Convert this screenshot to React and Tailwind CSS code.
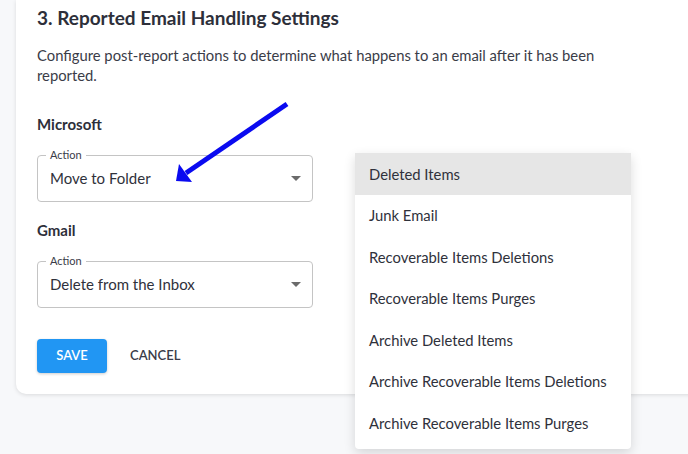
import React from "react";

const font = { fontFamily: "Lato, 'Noto Sans', sans-serif" };

function Caret() {
  return (
    <svg width="10" height="5" viewBox="0 0 10 5" className="shrink-0">
      <path d="M0 0 L10 0 L5 5 Z" fill="#6b6b6b" />
    </svg>
  );
}

function SelectBox({ value }) {
  return (
    <div className="relative w-[276px] h-[47px] border border-[#c4c4c4] rounded-[4px] flex items-center pl-[12px] pr-[11px]">
      <span className="absolute -top-[8px] left-[8px] bg-white px-[4px] text-[11px] leading-[14px] text-[#3a3c48]">
        Action
      </span>
      <span className="flex-1 text-[15px] text-[#2f313b]">{value}</span>
      <Caret />
    </div>
  );
}

const items = [
  "Deleted Items",
  "Junk Email",
  "Recoverable Items Deletions",
  "Recoverable Items Purges",
  "Archive Deleted Items",
  "Archive Recoverable Items Deletions",
  "Archive Recoverable Items Purges",
];

export default function App() {
  return (
    <div className="relative w-[688px] h-[454px] overflow-hidden bg-[#f7f8fa]" style={font}>
      <div className="ml-[16px] w-[700px] bg-white rounded-bl-[10px] shadow-[0_1px_4px_rgba(0,0,0,0.12)] pt-[6px] pl-[21px] pb-[21px]">
        <h2 className="text-[19px] leading-[24px] font-bold text-[#2d2f3a]">
          3. Reported Email Handling Settings
        </h2>
        <p className="mt-[15px] w-[580px] text-[14.8px] leading-[20px] text-[#3a3c48]">
          Configure post-report actions to determine what happens to an email after it has been reported.
        </p>
        <h3 className="mt-[29px] text-[15px] leading-[20px] font-bold text-[#2d2f3a]">Microsoft</h3>
        <div className="mt-[21px]">
          <SelectBox value="Move to Folder" />
        </div>
        <h3 className="mt-[18px] text-[15px] leading-[20px] font-bold text-[#2d2f3a]">Gmail</h3>
        <div className="mt-[21px]">
          <SelectBox value="Delete from the Inbox" />
        </div>
        <div className="mt-[31px] flex items-center">
          <button className="w-[70px] h-[34px] rounded-[4px] bg-[#2196f3] text-white text-[13px] font-semibold shadow-[0_1px_3px_rgba(0,0,0,0.2)]">
            SAVE
          </button>
          <button className="ml-[23px] text-[13px] font-semibold text-[#3a3c48]">CANCEL</button>
        </div>
      </div>

      <div className="absolute left-[355px] top-[153px] w-[276px] bg-white rounded-b-[4px] shadow-[0_4px_12px_rgba(0,0,0,0.14)] pb-[5px]">
        {items.map((t, i) => (
          <div
            key={t}
            className={`h-[41.5px] flex items-center pl-[14px] text-[14.8px] text-[#2f313b] ${i === 0 ? "bg-[#e6e6e6]" : ""}`}
          >
            {t}
          </div>
        ))}
      </div>

      <svg className="absolute left-0 top-0 pointer-events-none" width="688" height="454">
        <line x1="287" y1="104" x2="186" y2="173" stroke="#0a0af0" strokeWidth="5" />
        <path d="M176 181 L179 164 L192 182 Z" fill="#0a0af0" />
      </svg>
    </div>
  );
}
